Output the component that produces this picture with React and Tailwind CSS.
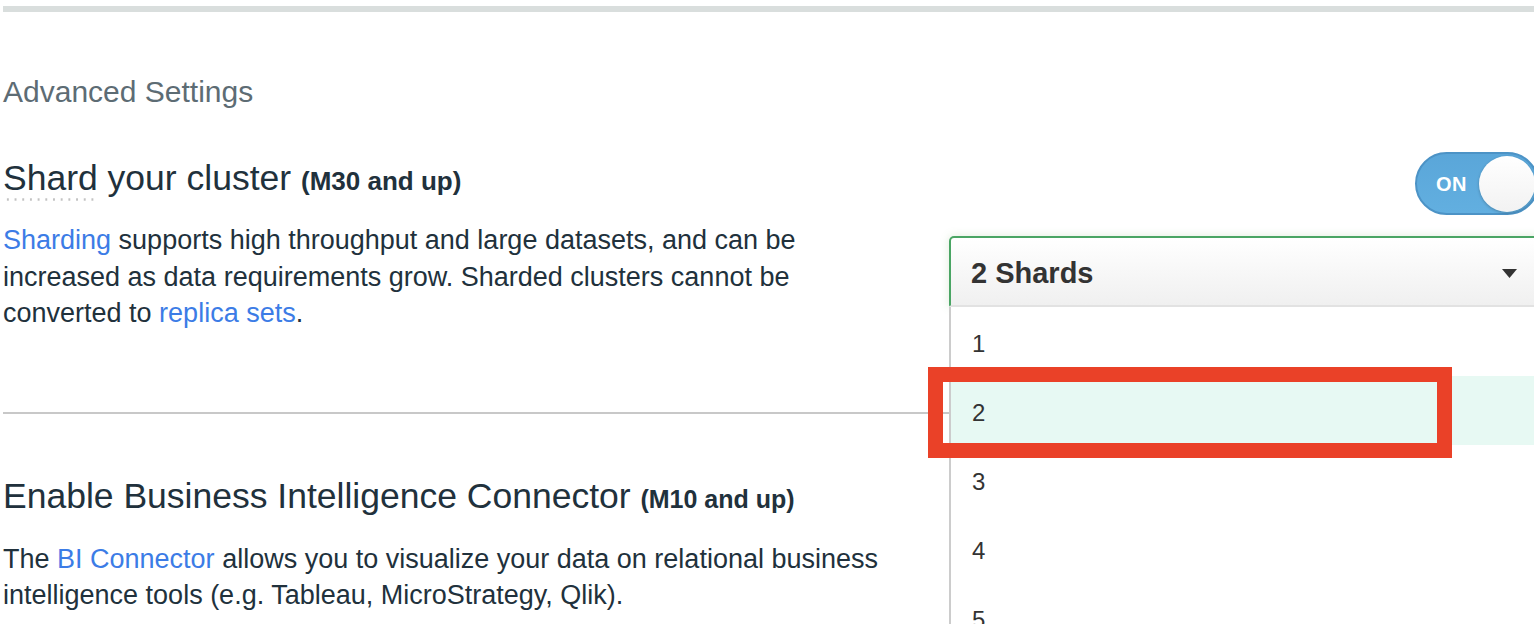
import React from "react";

const shardOptions = [1, 2, 3, 4, 5, 6];

function Toggle() {
  return (
    <div className="flex items-center w-[124px] h-[63px] rounded-full border-2 border-[#4c93c6] bg-linear-to-b from-[#5aa6d9] to-[#62afe0] pl-[19px] pr-[2px]">
      <span className="text-white font-bold text-[20px] leading-none tracking-[0.5px]">
        ON
      </span>
      <span className="ml-auto w-[56px] h-[56px] rounded-full bg-linear-to-b from-white to-[#f2f2f2] shadow-[0_1px_3px_rgba(0,0,0,0.25)]" />
    </div>
  );
}

function ShardSelect() {
  return (
    <div className="relative mt-[21px]">
      <div className="flex items-center h-[71px] pt-[4px] pl-[20px] pr-[30px] border-2 border-[#4aa564] border-b-[#e2e2e2] rounded-t-[5px] rounded-b-[2px] bg-linear-to-b from-white to-[#f0f0f0] shadow-[0_0_10px_rgba(110,170,90,0.22)]">
        <span className="text-[29px] font-bold text-[#333333]">2 Shards</span>
        <svg className="ml-auto" width="15" height="9" viewBox="0 0 15 9">
          <polygon points="0,0 15,0 7.5,9" fill="#333333" />
        </svg>
      </div>

      <ul className="absolute left-0 top-full w-full bg-white border-l-2 border-[#cccccc] z-10">
        {shardOptions.map((n) => (
          <li
            key={n}
            className={`flex items-center h-[69px] pt-[4px] pl-[21px] text-[24px] text-[#333333] ${
              n === 2 ? "bg-[#e7f9f3]" : ""
            }`}
          >
            {n}
          </li>
        ))}
      </ul>
    </div>
  );
}

export default function App() {
  return (
    <div className="relative w-[1534px] h-[624px] overflow-hidden bg-white pt-[6px] font-['Liberation_Sans',Arial,sans-serif] text-[#21313c]">
      <div className="ml-[3px] h-[6px] bg-[#d9dedd]" />

      <div className="pl-[3px]">
        <h2 className="mt-[62px] text-[30px] leading-[36px] text-[#5d6c74]">
          Advanced Settings
        </h2>

        {/* sharding */}
        <div className="flex mt-[42px]">
          <div className="w-[946px] shrink-0 pt-[5px]">
            <h3 className="text-[35.5px] leading-[42px]">
              <span className="relative">
                Shard
                <span className="absolute left-[1px] right-0 bottom-[-3px] h-[3px] bg-[radial-gradient(circle,#c2c2c2_1px,transparent_1.4px)] bg-[length:7.7px_3px]" />
              </span>{" "}
              your cluster{" "}
              <span className="text-[26px] font-bold">(M30 and up)</span>
            </h3>
            <p className="mt-[20px] w-[910px] text-[27px] leading-[36.5px]">
              <a className="text-[#3c7ce6]">Sharding</a> supports high throughput
              and large datasets, and can be increased as data requirements grow.
              Sharded clusters cannot be converted to{" "}
              <a className="text-[#3c7ce6]">replica sets</a>.
            </p>
          </div>

          <div className="flex flex-col w-[600px] shrink-0">
            <div className="self-end mr-[10px]">
              <Toggle />
            </div>
            <ShardSelect />
          </div>
        </div>

        <div className="mt-[80px] h-[2px] bg-[#c8c8c8]" />

        {/* BI connector */}
        <h3 className="mt-[61px] text-[35.5px] leading-[42px]">
          Enable Business Intelligence Connector{" "}
          <span className="text-[25px] font-bold">(M10 and up)</span>
        </h3>
        <p className="mt-[21px] w-[910px] text-[27px] leading-[36.5px]">
          The <a className="text-[#3c7ce6]">BI Connector</a> allows you to
          visualize your data on relational business intelligence tools (e.g.
          Tableau, MicroStrategy, Qlik).
        </p>
      </div>

      {/* annotation */}
      <div className="absolute left-[928px] top-[367px] w-[524px] h-[91px] border-[15px] border-[#ea4128] z-20" />
    </div>
  );
}
